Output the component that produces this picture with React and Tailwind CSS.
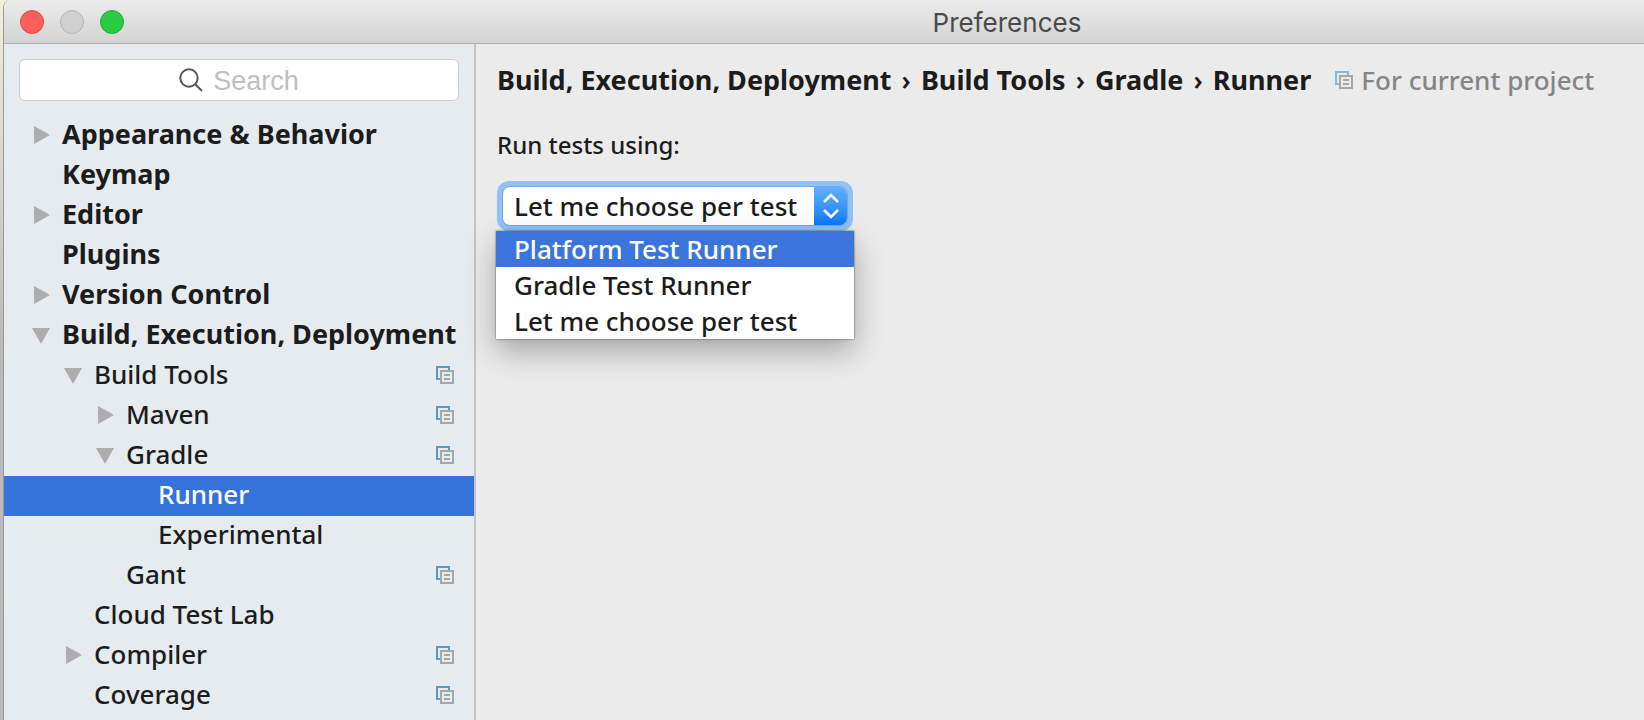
import React, { useState } from 'react'

const TREE = [
  { label: 'Appearance & Behavior', level: 0, arrow: 'closed' },
  { label: 'Keymap', level: 0 },
  { label: 'Editor', level: 0, arrow: 'closed' },
  { label: 'Plugins', level: 0 },
  { label: 'Version Control', level: 0, arrow: 'closed' },
  { label: 'Build, Execution, Deployment', level: 0, arrow: 'open' },
  { label: 'Build Tools', level: 1, arrow: 'open', project: true },
  { label: 'Maven', level: 2, arrow: 'closed', project: true },
  { label: 'Gradle', level: 2, arrow: 'open', project: true },
  { label: 'Runner', level: 3 },
  { label: 'Experimental', level: 3 },
  { label: 'Gant', level: 2, project: true },
  { label: 'Cloud Test Lab', level: 1 },
  { label: 'Compiler', level: 1, arrow: 'closed', project: true },
  { label: 'Coverage', level: 1, project: true }
]

const INDENT = ['pl-7', 'pl-[60px]', 'pl-[92px]', 'pl-[124px]']

const CRUMBS = ['Build, Execution, Deployment', 'Build Tools', 'Gradle', 'Runner']

const RUNNERS = ['Platform Test Runner', 'Gradle Test Runner', 'Let me choose per test']

const ProjectIcon = ({ className }) => (
  <svg viewBox="0 0 18 18" className={`h-[18px] w-[18px] shrink-0 ${className}`} aria-hidden="true">
    <path d="M0 0H14V4H12V2H2V12H4V14H0Z" fill="currentColor" />
    <path d="M4 4H18V18H4ZM6 6V16H16V6Z" fill="#a6a6a6" fillRule="evenodd" />
    <path d="M8 8H14V10H8ZM8 12H14V14H8Z" fill="#a6a6a6" />
  </svg>
)

const Arrow = ({ state }) => (
  <svg viewBox="0 0 18 18" className="h-[18px] w-[18px] fill-[#adadad]" aria-hidden="true">
    {state === 'open' && <path d="M0 2H18L9 18Z" />}
    {state === 'closed' && <path d="M2 0L18 9L2 18Z" />}
  </svg>
)

const TreeRow = ({ item, selected, onSelect }) => (
  <li>
    <button
      type="button"
      onClick={onSelect}
      className={`flex h-10 w-full items-center pr-5 pb-0.5 text-left ${INDENT[item.level]} ${
        selected ? 'bg-[#3572da] text-white' : ''
      } ${item.level === 0 ? 'text-[27px] font-bold' : 'font-medium'}`}
    >
      <span className="w-[30px] shrink-0">
        <Arrow state={item.arrow} />
      </span>
      <span className="grow pb-0.5 whitespace-nowrap">{item.label}</span>
      {item.project && <ProjectIcon className="text-[#569ac2]" />}
    </button>
  </li>
)

const TitleBar = () => (
  <header className="flex h-11 items-center border-b border-[#b0b0b0] bg-linear-to-b from-[#ececec] to-[#d3d3d3] pl-4">
    <div className="flex gap-4">
      <button type="button" aria-label="Close" className="h-6 w-6 rounded-full border border-[#e2463f] bg-[#ff6059]" />
      <button type="button" aria-label="Minimize" className="h-6 w-6 rounded-full border border-[#b4b4b4] bg-[#d0d0d0]" />
      <button type="button" aria-label="Zoom" className="h-6 w-6 rounded-full border border-[#1eab30] bg-[#29cc41]" />
    </div>
    <h1 className="grow pt-0.5 pl-[246px] text-center font-['Inter',sans-serif] text-[#4a4a4a]">Preferences</h1>
  </header>
)

const Sidebar = () => {
  const [selected, setSelected] = useState('Runner')

  return (
    <aside className="w-[472px] shrink-0 border-r-2 border-[#c4c4c4] bg-[#e6ebef]">
      <div className="px-[15px] py-[15px]">
        <label className="flex h-[42px] items-center justify-center gap-[10px] rounded-md border border-[#c8cccf] bg-white">
          <svg viewBox="0 0 24 24" className="h-6 w-6 fill-none stroke-[#555555] stroke-2" aria-hidden="true">
            <circle cx="10" cy="10" r="8.7" />
            <path d="M16 16L23 23" />
          </svg>
          <input
            type="text"
            aria-label="Search"
            placeholder="Search"
            className="field-sizing-content pt-0.5 font-['Liberation_Sans',sans-serif] text-[27px] outline-none placeholder:text-[#c0c0c0]"
          />
        </label>
      </div>
      <ul>
        {TREE.map(item => (
          <TreeRow
            key={item.label}
            item={item}
            selected={item.label === selected}
            onSelect={() => setSelected(item.label)}
          />
        ))}
      </ul>
    </aside>
  )
}

const RunnerSelect = () => {
  const [value, setValue] = useState('Let me choose per test')
  const [hovered, setHovered] = useState('Platform Test Runner')

  return (
    <div className="relative mt-5 w-[356px] font-medium">
      <div className="rounded-xl bg-[#93c0f5] p-[5px]">
        <div className="relative flex h-10 overflow-hidden rounded-lg border border-[#6fa9ec] bg-white">
          <select
            id="runner"
            value={value}
            onChange={e => setValue(e.target.value)}
            className="w-full appearance-none pl-[11px] outline-none"
          >
            {RUNNERS.map(runner => (
              <option key={runner}>{runner}</option>
            ))}
          </select>
          <span className="pointer-events-none absolute inset-y-0 right-0 flex w-[33px] items-center justify-center bg-linear-to-b from-[#62aefb] to-[#007aff]">
            <svg viewBox="0 0 16 26" className="h-[26px] w-4 fill-none stroke-white stroke-[2.5]" aria-hidden="true">
              <path d="M1 9L8 2L15 9M1 17L8 24L15 17" />
            </svg>
          </span>
        </div>
      </div>

      <ul className="absolute top-full -left-px w-[358px] bg-white shadow-[0_0_2px_rgba(0,0,0,0.6),0_12px_28px_rgba(0,0,0,0.3)]">
        {RUNNERS.map(runner => (
          <li key={runner}>
            <button
              type="button"
              onMouseEnter={() => setHovered(runner)}
              onClick={() => setValue(runner)}
              className={`flex h-9 w-full items-center pl-[18px] ${
                runner === hovered ? 'bg-[#3b75db] text-white' : ''
              }`}
            >
              {runner}
            </button>
          </li>
        ))}
      </ul>
    </div>
  )
}

const App = () => (
  <div className="min-h-screen bg-linear-to-b from-[#f3efdc] via-[#b8b8b8] to-[#bcbcbc] pl-[3px]">
    <div className="flex min-h-screen flex-col overflow-hidden rounded-tl-lg border-l border-[#9a9a9a] bg-[#ebebeb] font-['Noto_Sans','Open_Sans',sans-serif] text-[26px] leading-9 text-[#1c1c1c]">
      <TitleBar />
      <div className="flex grow">
        <Sidebar />
        <main className="grow px-[21px] pt-[18px]">
          <nav className="flex items-center whitespace-nowrap">
            <ol className="flex gap-[10px] text-[27px] font-bold">
              {CRUMBS.map((crumb, i) => (
                <li key={crumb} className="flex gap-[10px]">
                  {i > 0 && <span className="font-semibold">›</span>}
                  {crumb}
                </li>
              ))}
            </ol>
            <ProjectIcon className="ml-6 text-[#83b8e0]" />
            <span className="ml-2 font-medium text-[#858585]">For current project</span>
          </nav>
          <label htmlFor="runner" className="mt-[31px] block text-2xl font-medium">
            Run tests using:
          </label>
          <RunnerSelect />
        </main>
      </div>
    </div>
  </div>
)

export default App
